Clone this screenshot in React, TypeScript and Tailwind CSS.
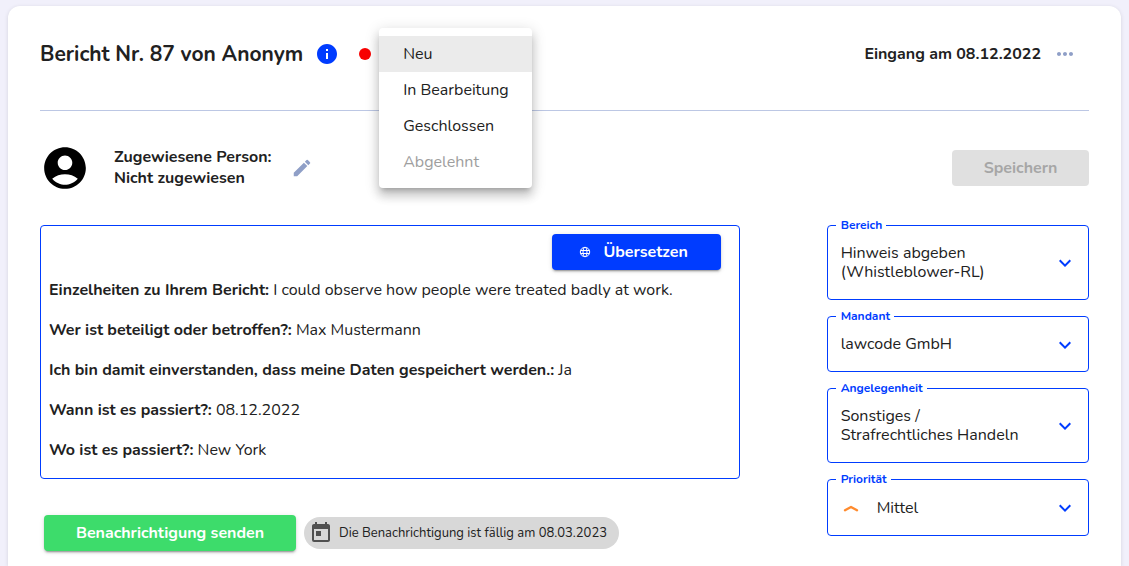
import { useState } from "react";
import type { ReactNode } from "react";
import {
  MdAccountCircle,
  MdEdit,
  MdExpandMore,
  MdInfo,
  MdMoreHoriz,
  MdToday,
} from "react-icons/md";

var details = [
  {
    label: "Einzelheiten zu Ihrem Bericht:",
    value: "I could observe how people were treated badly at work.",
  },
  { label: "Wer ist beteiligt oder betroffen?:", value: "Max Mustermann" },
  {
    label: "Ich bin damit einverstanden, dass meine Daten gespeichert werden.:",
    value: "Ja",
  },
  { label: "Wann ist es passiert?:", value: "08.12.2022" },
  { label: "Wo ist es passiert?:", value: "New York" },
];

var statuses = [
  { name: "Neu" },
  { name: "In Bearbeitung" },
  { name: "Geschlossen" },
  { name: "Abgelehnt", disabled: true },
];

function GlobeIcon() {
  return (
    <svg
      viewBox="0 0 12 12"
      className="w-3 h-3"
      fill="none"
      stroke="currentColor"
      aria-hidden="true"
    >
      <circle cx="6" cy="6" r="4.7" />
      <ellipse cx="6" cy="6" rx="2" ry="4.7" />
      <path d="M1.6 4.5h8.8M1.6 7.5h8.8" />
    </svg>
  );
}

function PriorityIcon() {
  return (
    <svg
      viewBox="0 0 20 20"
      className="w-5 h-5"
      fill="none"
      stroke="#ff8b2e"
      strokeWidth="2.4"
      strokeLinecap="round"
      strokeLinejoin="round"
      aria-hidden="true"
    >
      <path d="M4 12.2 10 9l6 3.2" />
    </svg>
  );
}

function StatusMenu() {
  var [status, setStatus] = useState("Neu");

  return (
    <ul
      role="menu"
      aria-label="Status"
      className="z-10 absolute -top-[10px] left-0 w-[153px] py-2 bg-white rounded-[4px] shadow-[0_5px_5px_-3px_rgba(0,0,0,0.2),0_8px_10px_1px_rgba(0,0,0,0.14),0_3px_14px_2px_rgba(0,0,0,0.12)]"
    >
      {statuses.map(({ name, disabled }) => (
        <li key={name} role="none">
          <button
            role="menuitem"
            disabled={disabled}
            onClick={() => setStatus(name)}
            className={`${
              status == name ? "bg-[#ebebeb]" : ""
            } block w-full h-9 px-6 text-left whitespace-nowrap disabled:text-[#9e9e9e]`}
          >
            {name}
          </button>
        </li>
      ))}
    </ul>
  );
}

type SelectFieldProps = {
  id: string;
  label: string;
  options: string[];
  icon?: ReactNode;
};

// The value wraps over several lines, so it is drawn beside an invisible native select
function SelectField({ id, label, options, icon }: SelectFieldProps) {
  var [value, setValue] = useState(options[0]);

  return (
    <fieldset className="relative min-w-0 border border-[#003cff] rounded-[4px]">
      <legend className="ml-2 pl-[5px] pr-1 text-xs leading-4 font-bold text-[#003cff]">
        <label htmlFor={id}>{label}</label>
      </legend>
      <div className="flex items-center gap-4 pl-[13px] pr-[11px] pt-[11px] pb-[17px]">
        {icon}
        <span className="flex-1 min-w-0 leading-[19px] whitespace-pre-line">
          {value}
        </span>
        <MdExpandMore className="w-6 h-6 -my-1 shrink-0 text-[#003cff]" />
      </div>
      <select
        id={id}
        value={value}
        onChange={(e) => setValue(e.target.value)}
        className="absolute inset-0 w-full h-full opacity-0 cursor-pointer"
      >
        {options.map((option) => (
          <option key={option} value={option}>
            {option}
          </option>
        ))}
      </select>
    </fieldset>
  );
}

function Header() {
  return (
    <header className="flex items-start justify-between h-[73px] border-b border-[#bcc7e4]">
      <div className="flex items-center h-8">
        <h1 className="text-[21px] leading-8 font-bold">
          Bericht Nr. 87 von Anonym
        </h1>
        <button aria-label="Informationen" className="ml-3 text-[#003cff]">
          <MdInfo className="w-6 h-6" />
        </button>
        <span className="ml-5 w-3 h-3 rounded-full bg-[#f80000]" />
        <div className="relative self-start ml-2">
          <StatusMenu />
        </div>
      </div>
      <div className="flex items-center gap-3 h-8 pr-3">
        <span className="font-bold">Eingang am 08.12.2022</span>
        <button aria-label="Weitere Aktionen" className="text-[#8f9fc7]">
          <MdMoreHoriz className="w-6 h-6" />
        </button>
      </div>
    </header>
  );
}

function Assignee() {
  return (
    <section className="flex items-center mt-8">
      <MdAccountCircle className="w-[50px] h-[50px] text-black" />
      <p className="ml-6 leading-[21px] font-bold">
        Zugewiesene Person:
        <br />
        Nicht zugewiesen
      </p>
      <button aria-label="Person bearbeiten" className="ml-[19px] text-[#8f9fc7]">
        <MdEdit className="w-[22px] h-[22px]" />
      </button>
      <button
        disabled
        className="ml-auto h-9 w-[137px] rounded-[4px] bg-[#e0e0e0] text-[#a6a6a6] font-bold"
      >
        Speichern
      </button>
    </section>
  );
}

function Report() {
  return (
    <section>
      <div className="flex flex-col px-2 pt-2 pb-4 border border-[#003cff] rounded-[4px]">
        <button className="self-end flex items-center justify-center gap-3 pr-[5px] mr-[10px] mb-2 h-9 w-[169px] rounded-[4px] bg-[#003cff] text-white font-bold shadow-[0_3px_1px_-2px_rgba(0,0,0,0.2),0_2px_2px_0_rgba(0,0,0,0.14),0_1px_5px_0_rgba(0,0,0,0.12)]">
          <GlobeIcon />
          Übersetzen
        </button>
        <div className="flex flex-col gap-4">
          {details.map(({ label, value }) => (
            <p key={label} className="leading-6">
              <b className="font-bold">{label}</b> {value}
            </p>
          ))}
        </div>
      </div>
      <div className="flex items-center gap-2 mt-9 ml-1">
        <button className="h-9 w-[252px] rounded-[4px] bg-[#3ddc6b] text-white font-bold shadow-[0_3px_1px_-2px_rgba(0,0,0,0.2),0_2px_2px_0_rgba(0,0,0,0.14),0_1px_5px_0_rgba(0,0,0,0.12)]">
          Benachrichtigung senden
        </button>
        <div className="flex items-center gap-[6px] h-8 pl-[5px] pr-3 rounded-full bg-[#d8d8d8] text-[13px]">
          <MdToday className="w-6 h-6 text-[#505050]" />
          <span className="leading-5">
            Die Benachrichtigung ist fällig am 08.03.2023
          </span>
        </div>
      </div>
    </section>
  );
}

function App() {
  return (
    <div className="flex flex-col min-h-screen px-2 pt-[6px] bg-[#f1f0fb] text-base text-[#212121] font-[Nunito,Lato,sans-serif]">
      <main className="flex-1 px-8 pt-8 bg-white rounded-t-xl shadow-[0_1px_4px_rgba(0,0,0,0.12)]">
        <Header />
        <Assignee />
        <div className="grid grid-cols-[8fr_3fr] gap-x-[87px] mt-8">
          <Report />
          <aside className="flex flex-col gap-2 -mt-2">
            <SelectField
              id="bereich"
              label="Bereich"
              options={["Hinweis abgeben (Whistleblower-RL)"]}
            />
            <SelectField
              id="mandant"
              label="Mandant"
              options={["lawcode GmbH"]}
            />
            <SelectField
              id="angelegenheit"
              label="Angelegenheit"
              options={["Sonstiges /\nStrafrechtliches Handeln"]}
            />
            <SelectField
              id="prioritaet"
              label="Priorität"
              options={["Mittel", "Hoch", "Niedrig"]}
              icon={<PriorityIcon />}
            />
          </aside>
        </div>
      </main>
    </div>
  );
}

export default App;
